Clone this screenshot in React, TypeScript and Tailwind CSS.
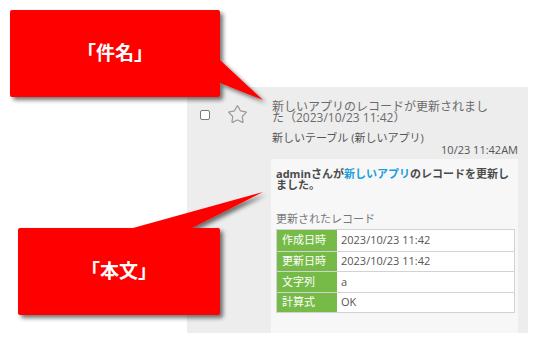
import { Star } from 'lucide-react';

const fields = [
  { label: '作成日時', value: '2023/10/23 11:42', h: 'h-[21px]' },
  { label: '更新日時', value: '2023/10/23 11:42', h: 'h-[20px]' },
  { label: '文字列', value: 'a', h: 'h-[21px]' },
  { label: '計算式', value: 'OK', h: 'h-[20px]' },
];

function Callouts() {
  return (
    <>
      <svg
        className="absolute left-0 top-0 pointer-events-none"
        width="550"
        height="345"
        viewBox="0 0 550 345"
      >
        <defs>
          <filter id="shade" x="-20%" y="-20%" width="140%" height="140%">
            <feDropShadow dx="3" dy="3" stdDeviation="2.2" floodColor="#000" floodOpacity="0.55" />
          </filter>
        </defs>
        <path
          d="M12 10 H218 Q220 10 220 12 V60 L263 100 L220 83 V95 Q220 97 218 97 H12 Q10 97 10 95 V12 Q10 10 12 10 Z"
          fill="#ff0000"
          filter="url(#shade)"
        />
        <path
          d="M20 228 H133 L263 192 L192 228 H218 Q220 228 220 230 V313 Q220 315 218 315 H20 Q18 315 18 313 V230 Q18 228 20 228 Z"
          fill="#ff0000"
          filter="url(#shade)"
        />
      </svg>
      {/* 件名 label */}
      <div className="absolute left-[10px] top-[10px] w-[210px] h-[87px] flex items-center justify-center text-white text-[19px] font-bold">
        「件名」
      </div>
      {/* 本文 label */}
      <div className="absolute left-[18px] top-[228px] w-[202px] h-[87px] flex items-center justify-center text-white text-[19px] font-bold">
        「本文」
      </div>
    </>
  );
}

export default function App() {
  return (
    <div className="relative w-[550px] h-[345px] overflow-hidden bg-white font-['Open_Sans','Noto_Sans_CJK_JP',sans-serif]">
      <div className="ml-[187px] pt-[87px]">
        <div className="flex w-[341px] h-[246px] bg-[#ededed]">
          {/* checkbox + star */}
          <div className="flex w-[84px] items-start pt-[17px]">
            <div className="ml-[13px] mt-[6px] w-[10px] h-[10px] rounded-[2px] border border-[#7a7a7a] bg-white" />
            <Star className="ml-[17px] w-[21px] h-[21px] text-[#9a9a9a]" strokeWidth={1.4} />
          </div>

          {/* mail content */}
          <div className="flex flex-col w-[247px] pt-[14px]">
            <div className="pl-px w-[224px] text-[12px] leading-[11px] text-[#6b6b6b]">
              新しいアプリのレコードが更新されました（2023/10/23 11:42）
            </div>
            <div className="mt-[9px] pl-px text-[11px] leading-[12px] text-[#555]">
              新しいテーブル (新しいアプリ)
            </div>
            <div className="text-right text-[11px] leading-[12px] text-[#555]">
              10/23 11:42AM
            </div>

            <div className="mt-[3px] flex-1 bg-[#f7f7f7] pl-[5px] pr-[3px] pt-[9px]">
              <div className="text-[11px] leading-[11px] font-bold text-[#4a4a4a]">
                <div>
                  adminさんが<span className="text-[#1a9ee0]">新しいアプリ</span>のレコードを更新し
                </div>
                <div>ました。</div>
              </div>
              <div className="mt-[22px] text-[11px] leading-[14px] text-[#777]">更新されたレコード</div>
              <div className="mt-[3px] border border-[#d2d2d2] text-[11px]">
                {fields.map((f, i) => (
                  <div
                    key={f.label}
                    className={`flex ${f.h} ${i > 0 ? 'border-t border-[#d2d2d2]' : ''}`}
                  >
                    <div className="w-[60px] flex items-center pl-[5px] bg-[#76bb48] text-white">
                      {f.label}
                    </div>
                    <div className="flex-1 flex items-center pl-[4px] bg-white text-[#555]">
                      {f.value}
                    </div>
                  </div>
                ))}
              </div>
            </div>
          </div>
        </div>
      </div>

      <Callouts />
    </div>
  );
}
